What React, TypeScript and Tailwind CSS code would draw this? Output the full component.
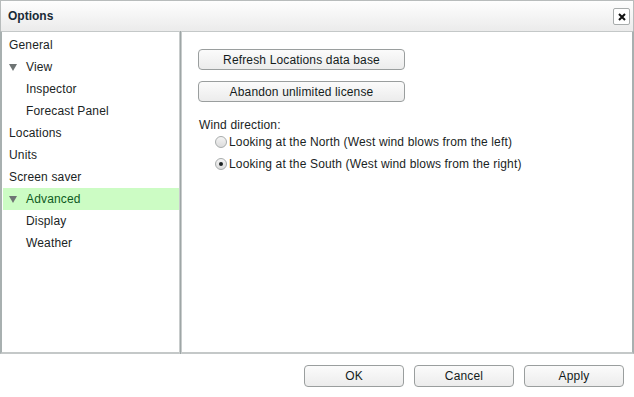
import React from 'react';

const treeItems = [
  { label: 'General', level: 0 },
  { label: 'View', level: 0, expanded: true },
  { label: 'Inspector', level: 1 },
  { label: 'Forecast Panel', level: 1 },
  { label: 'Locations', level: 0 },
  { label: 'Units', level: 0 },
  { label: 'Screen saver', level: 0 },
  { label: 'Advanced', level: 0, expanded: true, selected: true },
  { label: 'Display', level: 1 },
  { label: 'Weather', level: 1 },
];

const Button: React.FC<{ label: string; className?: string }> = ({ label, className }) => (
  <button
    className={`h-[21px] rounded-[4px] border border-[#9a9e9e] bg-gradient-to-b from-[#fbfbfb] to-[#ececec] text-[12px] leading-none text-[#141c1c] ${className ?? ''}`}
  >
    {label}
  </button>
);

const Radio: React.FC<{ checked?: boolean; label: string }> = ({ checked, label }) => (
  <div className="flex items-center h-[22px]">
    <span className="w-[12px] h-[12px] rounded-full border border-[#a8acac] bg-gradient-to-b from-[#f4f4f4] to-[#dcdcdc] flex items-center justify-center mr-[2px]">
      {checked && <span className="w-[4px] h-[4px] rounded-full bg-[#1c2222]" />}
    </span>
    <span>{label}</span>
  </div>
);

export default function App() {
  return (
    <div
      className="w-[634px] h-[397px] bg-white text-[12px] tracking-[0.15px] text-[#1a2424] overflow-hidden"
      style={{ fontFamily: '"Liberation Sans", Arial, sans-serif' }}
    >
      {/* title bar */}
      <div className="h-[31px] flex items-center justify-between pl-[7px] pr-[3px] bg-gradient-to-b from-[#fefefe] to-[#ebebeb] border-t border-x border-[#b8bcbc]">
        <span className="font-bold text-[12px] tracking-normal text-[#1a2a36]">Options</span>
        <span className="w-[17px] h-[17px] mt-[1px] border border-[#a8acac] rounded-[2px] bg-white flex items-center justify-center">
          <svg width="8" height="8" viewBox="0 0 8 8">
            <path d="M1 1L7 7M7 1L1 7" stroke="#111" strokeWidth="2" />
          </svg>
        </span>
      </div>

      {/* body */}
      <div className="flex h-[323px]">
        <div className="w-[179px] border-l-2 border-t border-b-2 border-[#c4c8c8] border-l-[#a8b0b0] pt-[2px]">
          {treeItems.map((item) => (
            <div
              key={item.label}
              className={`h-[22px] flex items-center ${item.selected ? 'bg-[#ccfcc4] text-[#0f5a1e] ml-[1px]' : ''}`}
            >
              {item.expanded ? (
                <>
                  <span className={`${item.selected ? 'ml-[6px]' : 'ml-[7px]'} w-[17px]`}>
                    <svg width="8" height="8" viewBox="0 0 8 8">
                      <path d="M0 1H8L4 8Z" fill="#6e7474" />
                    </svg>
                  </span>
                  <span>{item.label}</span>
                </>
              ) : (
                <span className={item.level === 1 ? 'ml-[24px]' : 'ml-[7px]'}>{item.label}</span>
              )}
            </div>
          ))}
        </div>
        <div className="w-[3px] bg-[#9ea6a6] border-x border-[#c8cccc]" />
        <div className="flex-1 border-t border-r-2 border-b-2 border-[#c4c8c8] border-r-[#a8b0b0] pl-[16px] pt-[17px]">
          <div className="flex flex-col gap-[11px] w-[207px]">
            <Button label="Refresh Locations data base" />
            <Button label="Abandon unlimited license" />
          </div>
          <div className="mt-[16px] pl-[1px] leading-[14px]">Wind direction:</div>
          <div className="pl-[17px] mt-[-1px]">
            <Radio label="Looking at the North (West wind blows from the left)" />
            <Radio checked label="Looking at the South (West wind blows from the right)" />
          </div>
        </div>
      </div>

      {/* footer */}
      <div className="flex justify-end gap-[10px] pt-[11px] pr-[10px]">
        <Button label="OK" className="w-[100px] h-[22px]" />
        <Button label="Cancel" className="w-[100px] h-[22px]" />
        <Button label="Apply" className="w-[100px] h-[22px]" />
      </div>
    </div>
  );
}
